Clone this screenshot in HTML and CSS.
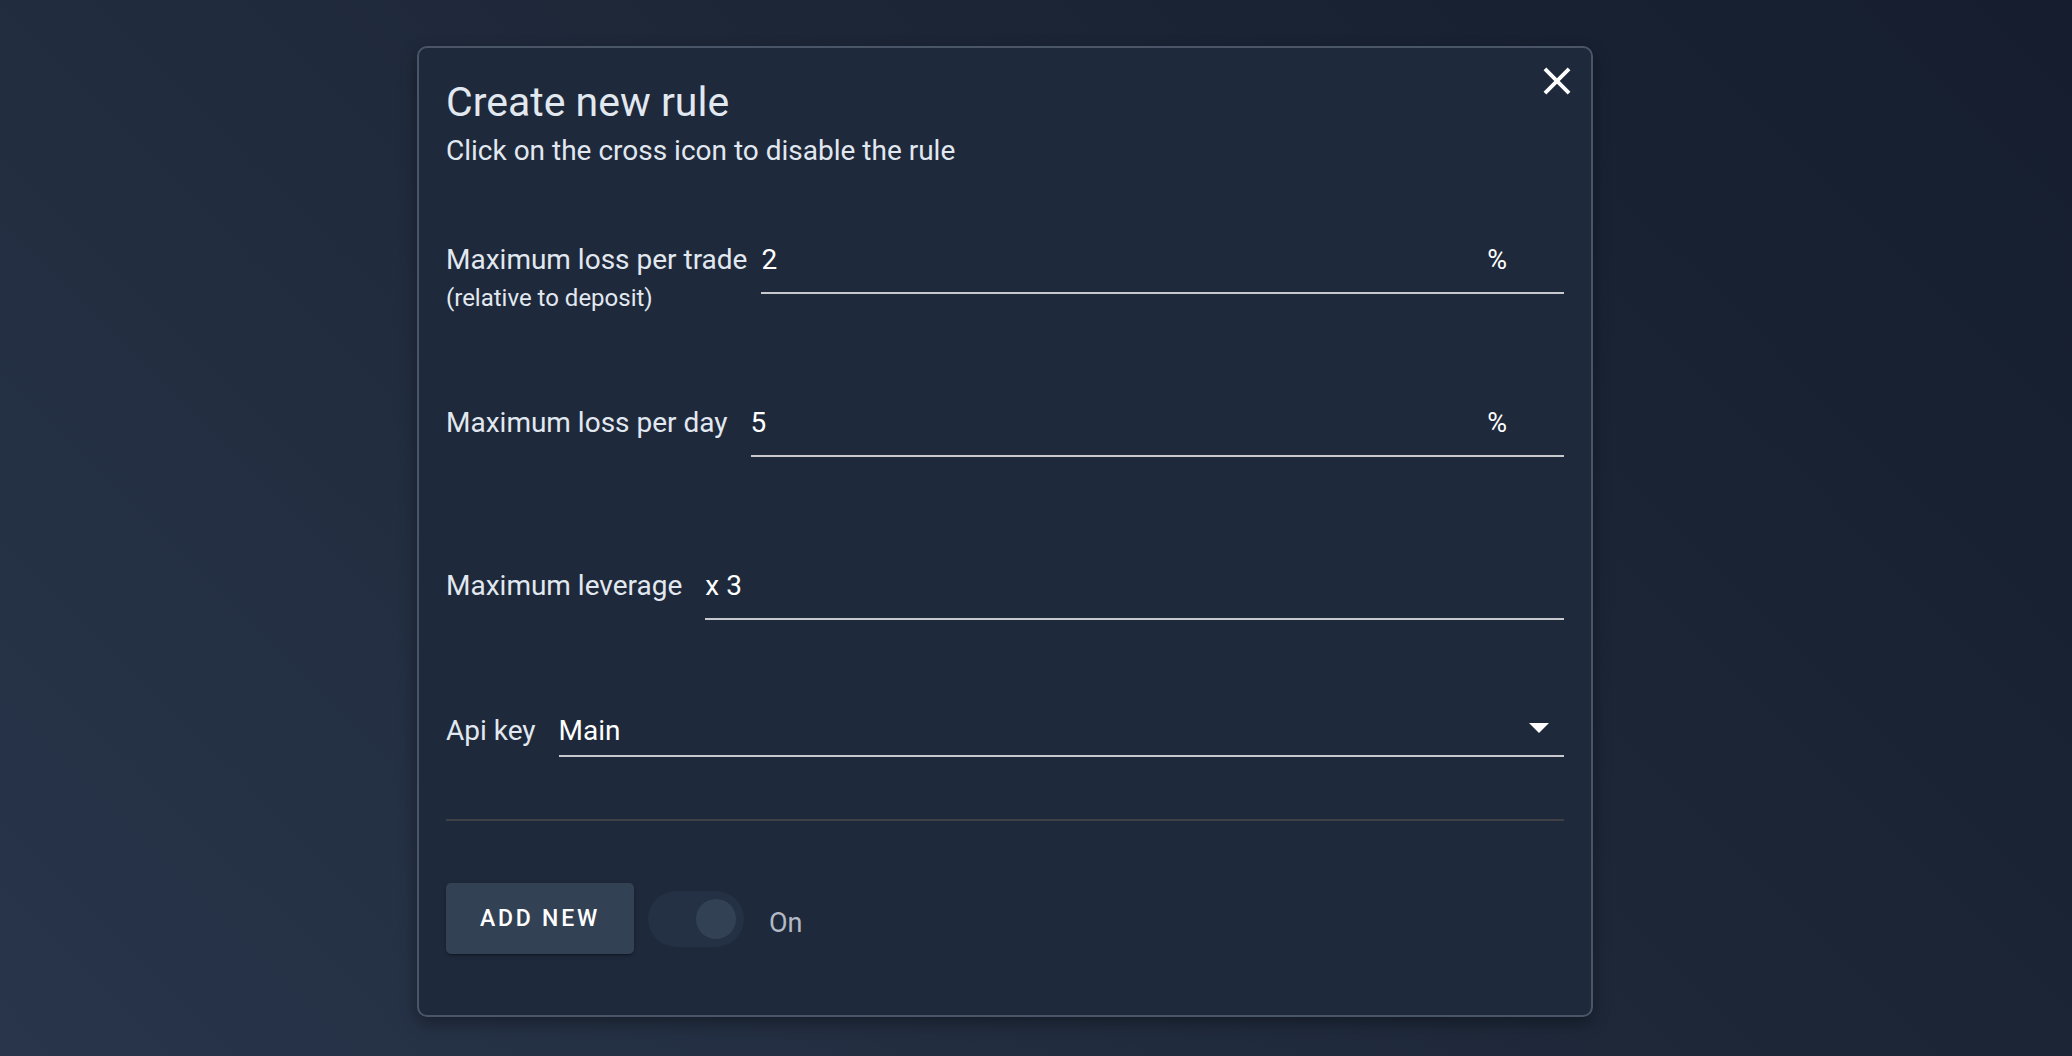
FILE: index.html
```html
<!DOCTYPE html>
<html lang="en">
<head>
<meta charset="utf-8">
<title>Create new rule</title>
<link rel="stylesheet" href="styles.css">
</head>
<body>
<div class="page">
  <section class="dialog">
    <button class="close" aria-label="Close">
      <svg viewBox="0 0 24 24" width="46" height="46"><path d="M19 6.41L17.59 5 12 10.59 6.41 5 5 6.41 10.59 12 5 17.59 6.41 19 12 13.41 17.59 19 19 17.59 13.41 12z" fill="#ffffff"/></svg>
    </button>
    <h1 class="title">Create new rule</h1>
    <p class="subtitle">Click on the cross icon to disable the rule</p>

    <div class="form">
      <div class="row row--tight row--first">
        <div class="label">
          <div class="label-main">Maximum loss per trade</div>
          <div class="label-sub">(relative to deposit)</div>
        </div>
        <div class="field">
          <span class="value">2</span>
          <span class="adorn">%</span>
        </div>
      </div>

      <div class="row row--day">
        <div class="label"><div class="label-main">Maximum loss per day</div></div>
        <div class="field">
          <span class="value">5</span>
          <span class="adorn">%</span>
        </div>
      </div>

      <div class="row row--lev">
        <div class="label"><div class="label-main">Maximum leverage</div></div>
        <div class="field">
          <span class="value">x 3</span>
        </div>
      </div>

      <div class="row row--api">
        <div class="label"><div class="label-main">Api key</div></div>
        <div class="field field--select">
          <span class="value">Main</span>
          <svg class="caret" viewBox="0 0 20 10" width="20" height="10"><path d="M0 0 L20 0 L10 10 Z" fill="#ffffff"/></svg>
        </div>
      </div>
    </div>

    <hr class="divider">

    <div class="footer">
      <button class="btn">ADD NEW</button>
      <div class="switch"><span class="thumb"></span></div>
      <span class="switch-label">On</span>
    </div>
  </section>
</div>
</body>
</html>
```
FILE: styles.css
```css
* { box-sizing: border-box; }
html, body {
  margin: 0;
  padding: 0;
  height: 1056px;
  overflow: hidden;
}
body {
  font-family: Roboto, "Noto Sans", "Liberation Sans", sans-serif;
  background: linear-gradient(225deg, #151d2e 0%, #1d2738 45%, #28354a 100%);
  color: #e2e8f0;
}
.page {
  padding: 46px 0 0 417px;
}
.dialog {
  position: relative;
  width: 1176px;
  height: 971px;
  background: #1e293b;
  border: 2px solid #4a5568;
  border-radius: 10px;
  padding: 30px 27px 25px;
  box-shadow: 0 6px 16px rgba(0, 0, 0, 0.35);
  display: flex;
  flex-direction: column;
}
.close {
  position: absolute;
  top: 10px;
  right: 11px;
  width: 46px;
  height: 46px;
  padding: 0;
  border: 0;
  background: transparent;
  display: flex;
}
.title {
  margin: 0;
  font-size: 41px;
  line-height: 48px;
  font-weight: 400;
  color: #e2e8f0;
}
.subtitle {
  margin: 9px 0 0;
  font-size: 28px;
  line-height: 32px;
  color: #e2e8f0;
}
.form {
  margin-top: 77px;
  display: flex;
  flex-direction: column;
}
.row {
  display: flex;
  align-items: flex-start;
  gap: 23px;
}
.row--tight { gap: 14px; }
.row--day { margin-top: 95px; }
.row--lev { margin-top: 113px; }
.row--api { margin-top: 95px; }
.label {
  flex: none;
  color: #e2e8f0;
}
.label-main {
  font-size: 28px;
  line-height: 32px;
  white-space: nowrap;
}
.label-sub {
  margin-top: 8px;
  font-size: 24px;
  line-height: 28px;
  white-space: nowrap;
}
.field {
  flex: 1;
  display: flex;
  align-items: flex-start;
  border-bottom: 2px solid #c8c9ce;
  padding-bottom: 16px;
}
.value {
  flex: 1;
  font-size: 28px;
  line-height: 32px;
  color: #ffffff;
}
.adorn {
  font-size: 27px;
  line-height: 32px;
  color: #ffffff;
  margin-right: 57px;
}
.field--select {
  padding-bottom: 8px;
  align-items: center;
}
.caret {
  margin-right: 15px;
  margin-bottom: 7px;
}
.divider {
  margin: 62px 0 0;
  border: 0;
  height: 2px;
  background: #3e4046;
}
.footer {
  margin-top: 62px;
  display: flex;
  align-items: center;
}
.btn {
  width: 188px;
  height: 71px;
  border: 0;
  border-radius: 5px;
  background: #334155;
  color: #ffffff;
  font-family: Roboto, "Noto Sans", sans-serif;
  font-size: 23px;
  font-weight: 500;
  letter-spacing: 2.8px;
  box-shadow: 0 3px 1px -2px rgba(0,0,0,0.2), 0 2px 2px 0 rgba(0,0,0,0.14), 0 1px 5px 0 rgba(0,0,0,0.12);
  padding: 0;
}
.switch {
  margin-left: 14px;
  width: 96px;
  height: 56px;
  border-radius: 28px;
  background: #243043;
  display: flex;
  align-items: center;
  justify-content: flex-end;
  padding-right: 8px;
}
.thumb {
  width: 40px;
  height: 40px;
  border-radius: 50%;
  background: #334155;
}
.switch-label {
  margin-left: 25px;
  margin-top: 8px;
  font-size: 27px;
  line-height: 32px;
  color: #b4b9c3;
}
```
